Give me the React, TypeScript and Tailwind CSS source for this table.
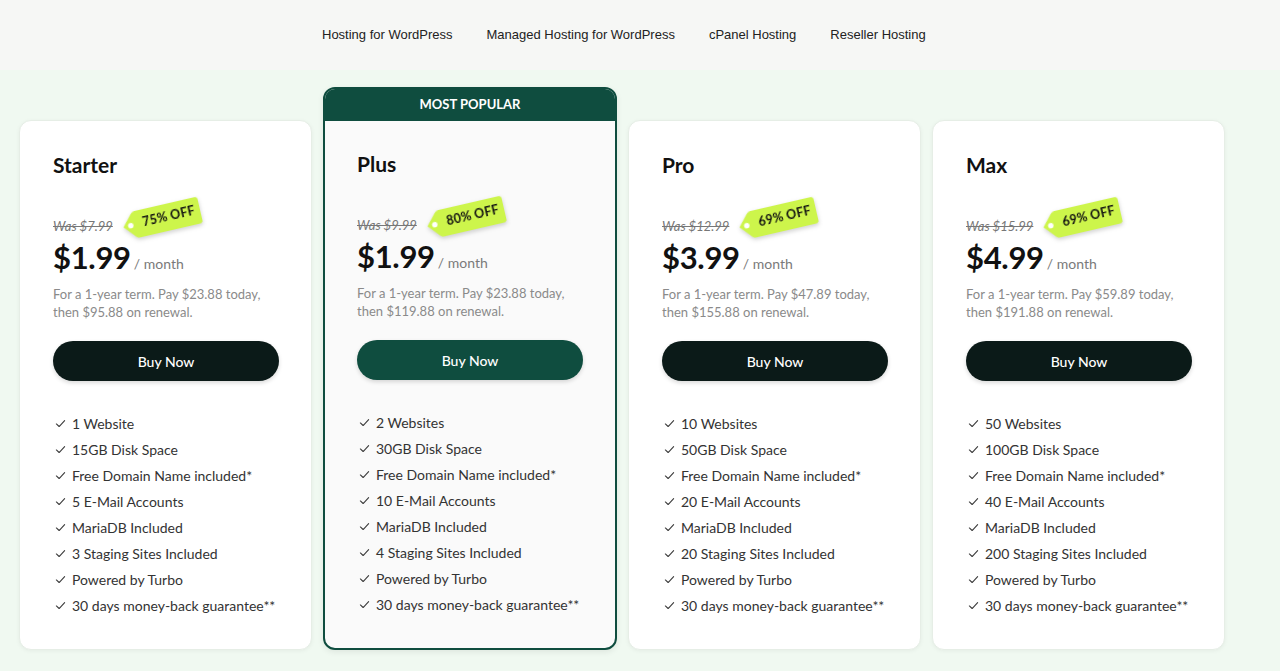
import React from "react";

type Plan = {
  name: string;
  was: string;
  off: string;
  price: string;
  pay: string;
  renew: string;
  features: string[];
  popular?: boolean;
};

const plans: Plan[] = [
  {
    name: "Starter",
    was: "Was $7.99",
    off: "75% OFF",
    price: "$1.99",
    pay: "$23.88",
    renew: "$95.88",
    features: ["1 Website", "15GB Disk Space", "Free Domain Name included*", "5 E-Mail Accounts", "MariaDB Included", "3 Staging Sites Included", "Powered by Turbo", "30 days money-back guarantee**"],
  },
  {
    name: "Plus",
    was: "Was $9.99",
    off: "80% OFF",
    price: "$1.99",
    pay: "$23.88",
    renew: "$119.88",
    popular: true,
    features: ["2 Websites", "30GB Disk Space", "Free Domain Name included*", "10 E-Mail Accounts", "MariaDB Included", "4 Staging Sites Included", "Powered by Turbo", "30 days money-back guarantee**"],
  },
  {
    name: "Pro",
    was: "Was $12.99",
    off: "69% OFF",
    price: "$3.99",
    pay: "$47.89",
    renew: "$155.88",
    features: ["10 Websites", "50GB Disk Space", "Free Domain Name included*", "20 E-Mail Accounts", "MariaDB Included", "20 Staging Sites Included", "Powered by Turbo", "30 days money-back guarantee**"],
  },
  {
    name: "Max",
    was: "Was $15.99",
    off: "69% OFF",
    price: "$4.99",
    pay: "$59.89",
    renew: "$191.88",
    features: ["50 Websites", "100GB Disk Space", "Free Domain Name included*", "40 E-Mail Accounts", "MariaDB Included", "200 Staging Sites Included", "Powered by Turbo", "30 days money-back guarantee**"],
  },
];

function Tag({ text }: { text: string }) {
  return (
    <div className="relative ml-[9px] h-[29px] w-[80px] shrink-0 -translate-y-[9px] -rotate-[13deg] drop-shadow-[0_2px_2px_rgba(0,0,0,0.18)]">
      <svg width="80" height="29" viewBox="0 0 80 29" className="absolute inset-0">
        <path d="M0.5 14.5 L11 2.5 Q12.5 1 14.5 1 H76 Q79 1 79 4 V25 Q79 28 76 28 H14.5 Q12.5 28 11 26.5 Z" fill="#cdf54b" />
        <circle cx="8" cy="14.5" r="2.7" fill="#ffffff" />
      </svg>
      <span className="absolute inset-y-0 left-[14px] right-0 flex items-center justify-center text-[12.5px] font-bold text-[#111] tracking-[0.2px]">
        {text}
      </span>
    </div>
  );
}

function Check() {
  return (
    <svg width="11" height="11" viewBox="0 0 12 12" className="shrink-0">
      <path d="M1.5 6.5 L4.5 9.3 L10.5 2.8" fill="none" stroke="#3b3b3b" strokeWidth="1.2" strokeLinecap="round" strokeLinejoin="round" />
    </svg>
  );
}

function Card({ p }: { p: Plan }) {
  const body = (
    <div className="px-[33px] pt-[30px] pb-[31px]">
      <h3 className="text-[21px] leading-[28px] font-bold text-[#111]">{p.name}</h3>
      <div className="mt-[39px] flex h-[18px] items-center">
        <span className="text-[13px] italic text-[#777] line-through">{p.was}</span>
        <Tag text={p.off} />
      </div>
      <div className="mt-[1px] flex items-baseline">
        <span className="text-[31px] leading-[40px] font-bold text-[#111] tracking-[-0.3px]">{p.price}</span>
        <span className="ml-[3px] text-[14px] text-[#7a7a7a]">/ month</span>
      </div>
      <p className="mt-[8px] text-[13px] leading-[18px] text-[#8a8a8a]">
        For a 1-year term. Pay {p.pay} today,
        <br />
        then {p.renew} on renewal.
      </p>
      <button
        className={`mt-[20px] flex h-[40px] w-[226px] items-center justify-center rounded-full text-[14px] font-medium text-white shadow-[0_2px_4px_rgba(0,0,0,0.15)] ${
          p.popular ? "bg-[#0f4d3f]" : "bg-[#0b1a18]"
        }`}
      >
        Buy Now
      </button>
      <ul className="mt-[29px] flex flex-col">
        {p.features.map((f) => (
          <li key={f} className="flex h-[26px] items-center gap-[6px] whitespace-nowrap pl-[2px] text-[14px] text-[#333]">
            <Check />
            <span>{f}</span>
          </li>
        ))}
      </ul>
    </div>
  );

  if (p.popular) {
    return (
      <div className="w-[294px] overflow-hidden rounded-[12px] border-2 border-[#0f4d3f] bg-[#fafafa] shadow-[0_2px_6px_rgba(0,0,0,0.08)]">
        <div className="flex h-[32px] items-center justify-center bg-[#0f4d3f] text-[13px] font-bold text-white">
          MOST POPULAR
        </div>
        <div className="-ml-[1px] -mt-[1px]">{body}</div>
      </div>
    );
  }
  return (
    <div className="w-[293px] rounded-[12px] border border-[#e6eee6] bg-white shadow-[0_1px_4px_rgba(0,0,0,0.05)]">
      {body}
    </div>
  );
}

export default function App() {
  return (
    <div
      className="min-h-[671px] w-full bg-[#f0f9f1]"
      style={{ fontFamily: 'Lato, "Noto Sans", sans-serif' }}
    >
      <nav
        className="flex h-[70px] items-center gap-[34px] bg-[#f6f7f5] pl-[322px] text-[13px] text-[#222]"
        style={{ fontFamily: '"Liberation Sans", Arial, sans-serif' }}
      >
        <span>Hosting for WordPress</span>
        <span>Managed Hosting for WordPress</span>
        <span>cPanel Hosting</span>
        <span>Reseller Hosting</span>
      </nav>
      <div className="flex items-end gap-[11px] pl-[19px] pt-[17px]">
        {plans.map((p) => (
          <Card key={p.name} p={p} />
        ))}
      </div>
    </div>
  );
}
